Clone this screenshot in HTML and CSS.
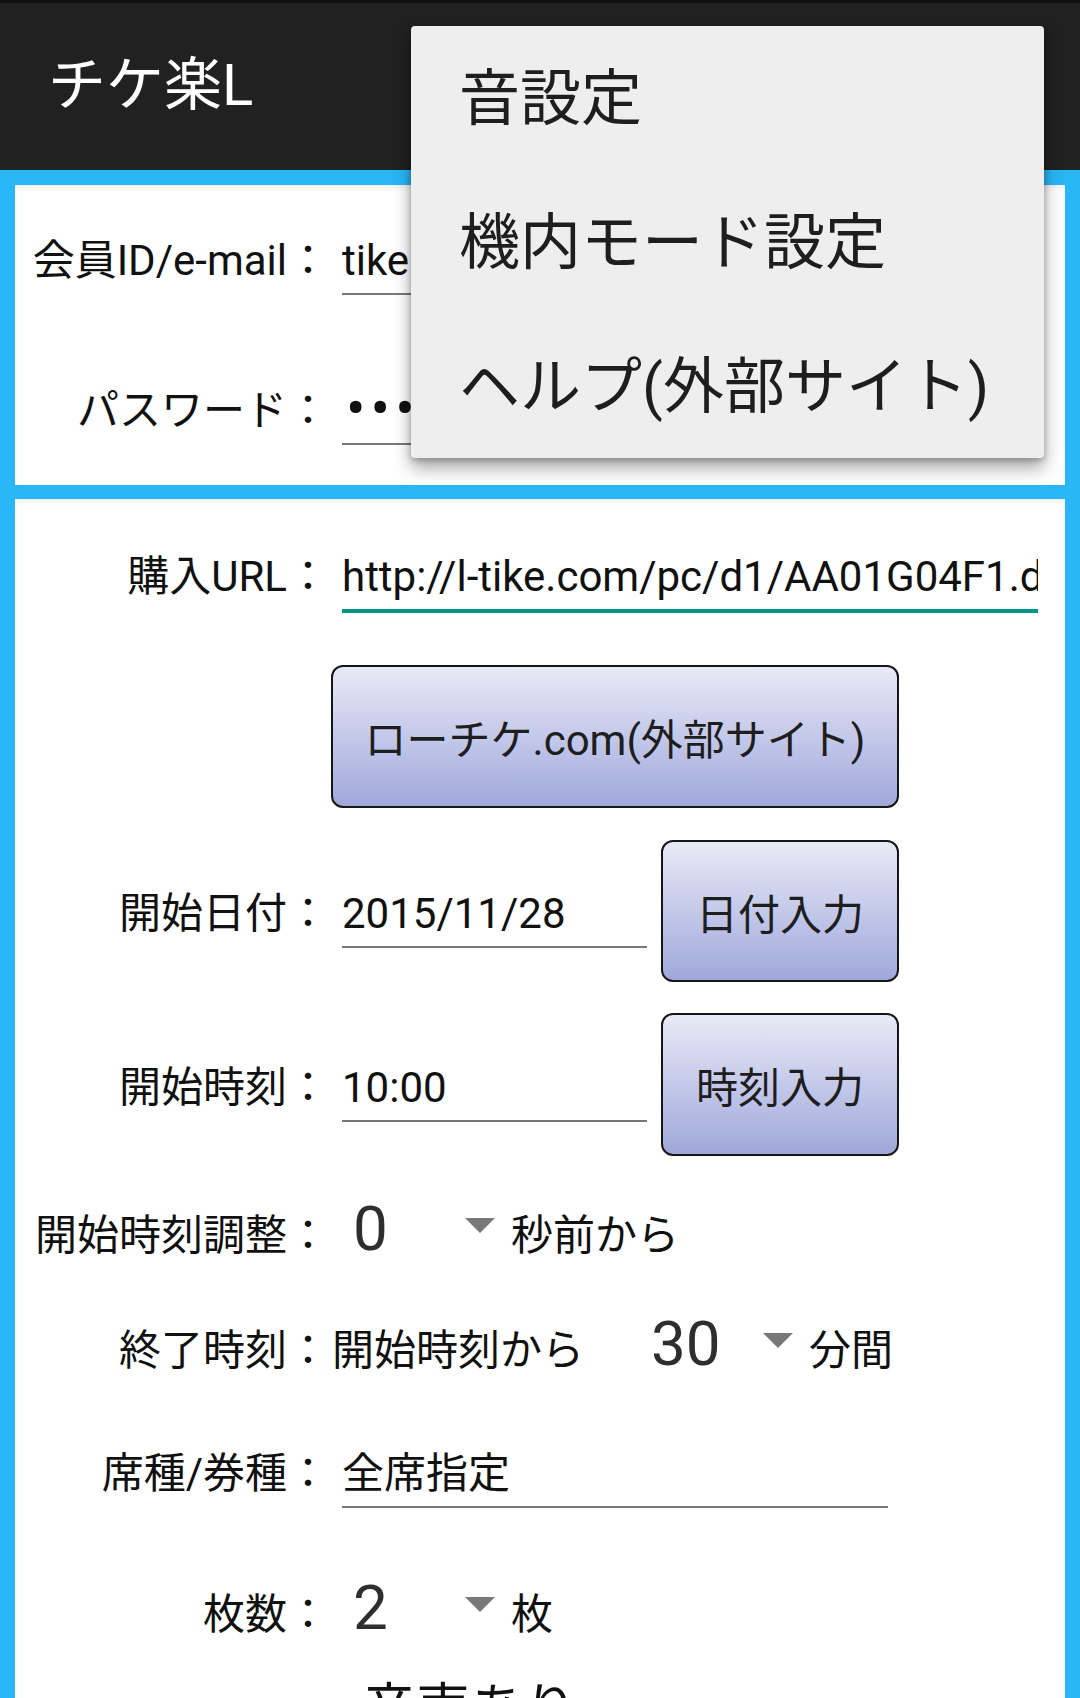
FILE: index.html
```html
<!DOCTYPE html>
<html lang="ja">
<head>
<meta charset="utf-8">
<title>チケ楽L</title>
<link rel="stylesheet" href="styles.css">
</head>
<body>
<div class="app">
  <header class="actionbar"><span class="title">チケ楽L</span></header>
  <main class="content">
    <section class="card card-login">
      <div class="field">
        <span class="label">会員ID/e-mail：</span>
        <span class="edit edit-wide">tikeraku_user@example.com</span>
      </div>
      <div class="field field-pass">
        <span class="label">パスワード：</span>
        <span class="edit edit-wide password"><span class="dots">••••••••••</span></span>
      </div>
    </section>

    <section class="card card-main">
      <div class="field">
        <span class="label">購入URL：</span>
        <span class="edit edit-wide focused">http://l-tike.com/pc/d1/AA01G04F1.do?lg=tk</span>
      </div>

      <div class="btn-row">
        <button class="btn btn-site">ローチケ.com(外部サイト)</button>
      </div>

      <div class="field-btn row-date">
        <span class="label">開始日付：</span>
        <span class="edit edit-short">2015/11/28</span>
        <button class="btn btn-small">日付入力</button>
      </div>

      <div class="field-btn row-time">
        <span class="label">開始時刻：</span>
        <span class="edit edit-short">10:00</span>
        <button class="btn btn-small btn-time">時刻入力</button>
      </div>

      <div class="field row-adjust">
        <span class="label">開始時刻調整：</span>
        <span class="spinner"><span class="val">0</span><i class="caret"></i></span>
        <span class="suffix">秒前から</span>
      </div>

      <div class="field row-end">
        <span class="label">終了時刻：</span>
        <span class="prefix">開始時刻から</span>
        <span class="spinner spinner-end"><span class="val">30</span><i class="caret"></i></span>
        <span class="suffix">分間</span>
      </div>

      <div class="field row-seat">
        <span class="label">席種/券種：</span>
        <span class="edit edit-seat">全席指定</span>
      </div>

      <div class="field row-count">
        <span class="label">枚数：</span>
        <span class="spinner"><span class="val">2</span><i class="caret"></i></span>
        <span class="suffix">枚</span>
      </div>

      <div class="check-text">音声あり</div>
    </section>
  </main>

  <nav class="popup-menu">
    <div class="menu-item">音設定</div>
    <div class="menu-item">機内モード設定</div>
    <div class="menu-item">ヘルプ(外部サイト)</div>
  </nav>
</div>
</body>
</html>
```

FILE: styles.css
```css
* {
  box-sizing: border-box;
}

html, body {
  margin: 0;
  padding: 0;
}

body {
  width: 1080px;
  height: 1698px;
  overflow: hidden;
  background: #29b6f6;
  font-family: Roboto, "Noto Sans CJK JP", sans-serif;
  font-size: 42px;
  color: #111;
}

.app {
  position: relative;
  width: 1080px;
  height: 1698px;
  overflow: hidden;
}

/* Action bar */
.actionbar {
  height: 170px;
  background: #212121;
  border-top: 3px solid #0e0e0e;
  display: flex;
  align-items: center;
  padding-left: 48px;
  padding-bottom: 4px;
}

.title {
  color: #ffffff;
  font-size: 58px;
  line-height: 70px;
}

/* Content */
.content {
  padding: 15px 15px 0 15px;
}

.card {
  background: #ffffff;
  box-shadow: inset 0 7px 7px -6px rgba(0, 0, 0, 0.10);
}

.card-login {
  height: 300px;
  padding-top: 48px;
}

.card-main {
  margin-top: 14px;
  height: 1200px;
  padding-top: 50px;
}

/* Rows */
.field {
  display: flex;
  align-items: baseline;
}

.field-pass {
  margin-top: 88px;
}

.label {
  flex: none;
  width: 314px;
  text-align: right;
  line-height: 56px;
  white-space: nowrap;
}

.edit {
  display: block;
  flex: none;
  margin-left: 13px;
  line-height: 56px;
  padding-bottom: 4px;
  border-bottom: 2px solid #777777;
  white-space: nowrap;
  overflow: hidden;
}

.edit-wide {
  width: 696px;
}

.focused {
  border-bottom: 4px solid #009688;
}

.password {
  padding-left: 4px;
}

.password .dots {
  font-size: 58px;
  line-height: 0;
  letter-spacing: 5px;
  vertical-align: -3px;
}

.edit-short {
  width: 305px;
}

.edit-seat {
  width: 546px;
}

/* Buttons */
.btn {
  font-family: Roboto, "Noto Sans CJK JP", sans-serif;
  font-size: 42px;
  color: #1e1e1e;
  border: 2px solid #161616;
  border-radius: 12px;
  background: linear-gradient(to bottom, #e8eaf6 0%, #c4c9ea 50%, #9fa8da 100%);
  padding: 0;
  flex: none;
}

.btn-row {
  margin-top: 52px;
  display: flex;
}

.btn-site {
  margin-left: 316px;
  width: 568px;
  height: 143px;
}

.field-btn {
  display: flex;
  align-items: flex-start;
}

.row-date {
  margin-top: 32px;
}

.row-time {
  margin-top: 31px;
}

.row-date .label,
.row-date .edit {
  margin-top: 46px;
}

.row-time .label,
.row-time .edit {
  margin-top: 47px;
}

.btn-small {
  margin-left: 14px;
  width: 238px;
  height: 142px;
}

.btn-time {
  height: 143px;
}

/* Spinner rows */
.row-adjust {
  margin-top: 38px;
}

.row-end {
  margin-top: 45px;
}

.row-seat {
  margin-top: 67px;
}

.row-count {
  margin-top: 65px;
}

.spinner {
  flex: none;
  margin-left: 24px;
  font-size: 62px;
  line-height: 70px;
  color: #2e2e2e;
  white-space: nowrap;
}

.spinner .val {
  display: inline-block;
  width: 112px;
}

.caret {
  display: inline-block;
  width: 0;
  height: 0;
  border-left: 15px solid transparent;
  border-right: 15px solid transparent;
  border-top: 15px solid #787878;
  margin-bottom: 17px;
  vertical-align: baseline;
}

.suffix {
  margin-left: 16px;
  line-height: 56px;
  white-space: nowrap;
}

.prefix {
  margin-left: 3px;
  line-height: 56px;
  white-space: nowrap;
}

.spinner-end {
  margin-left: 67px;
}

.check-text {
  margin-top: 32px;
  margin-left: 347px;
  font-size: 54px;
  line-height: 70px;
}

/* Popup menu */
.popup-menu {
  position: absolute;
  top: 26px;
  left: 411px;
  width: 633px;
  height: 432px;
  background: #eeeeee;
  border-radius: 4px;
  box-shadow: 0 10px 18px rgba(0, 0, 0, 0.35), 0 2px 6px rgba(0, 0, 0, 0.25);
}

.menu-item {
  height: 144px;
  display: flex;
  align-items: center;
  padding-left: 48px;
  padding-bottom: 10px;
  font-size: 61px;
  color: #1e1e1e;
  white-space: nowrap;
}
```
